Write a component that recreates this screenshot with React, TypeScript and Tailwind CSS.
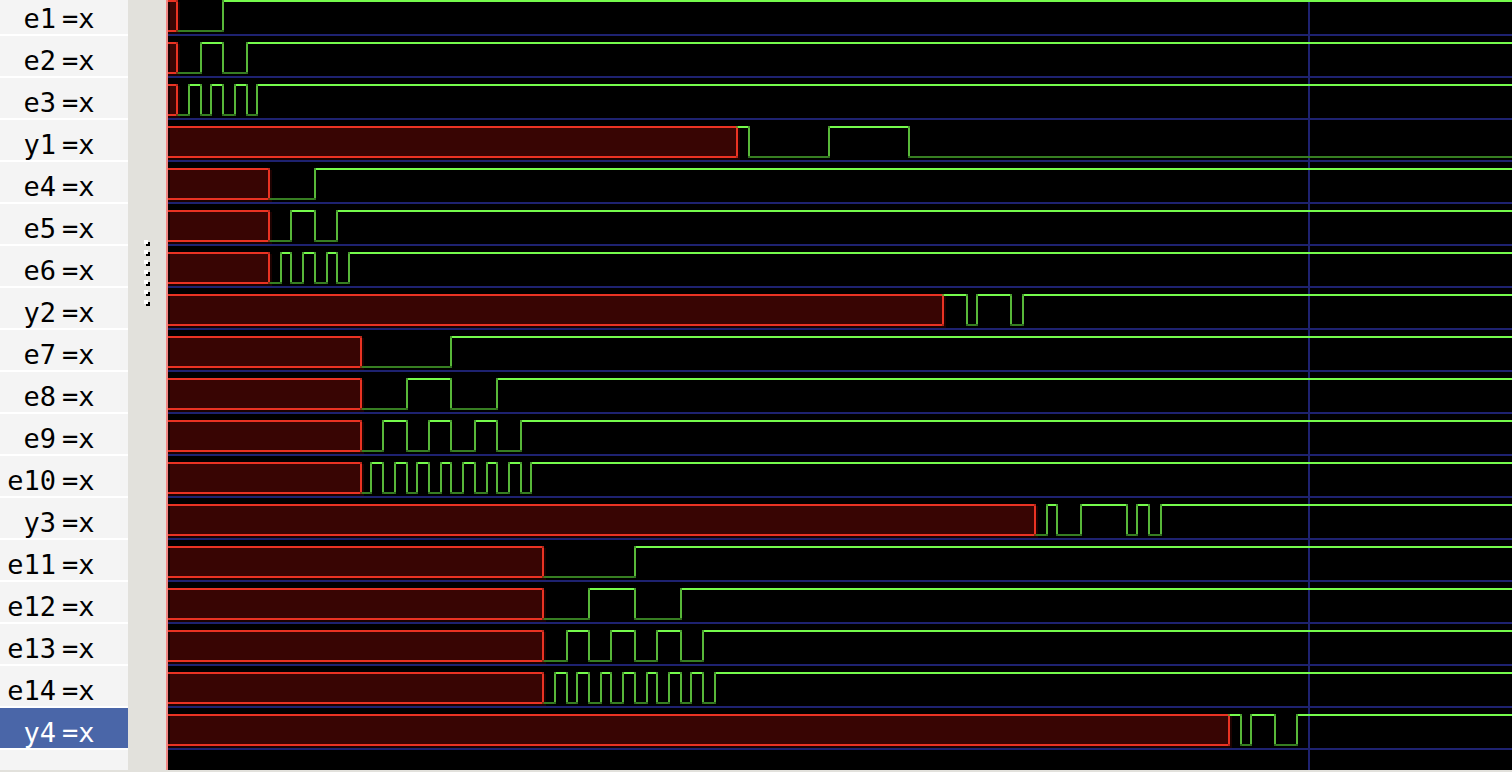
import { useState } from "react";

type Signal = {
  name: string;
  known: number;
  start: 0 | 1;
  edges: number[];
};

const signals: Signal[] = [
  { name: "e1", known: 9, start: 0, edges: [55] },
  { name: "e2", known: 9, start: 0, edges: [33, 55, 79] },
  { name: "e3", known: 9, start: 0, edges: [21, 33, 43, 55, 67, 79, 89] },
  { name: "y1", known: 569, start: 1, edges: [581, 661, 741] },
  { name: "e4", known: 101, start: 0, edges: [147] },
  { name: "e5", known: 101, start: 0, edges: [123, 147, 169] },
  { name: "e6", known: 101, start: 0, edges: [113, 123, 135, 147, 159, 169, 181] },
  { name: "y2", known: 775, start: 1, edges: [799, 809, 843, 855] },
  { name: "e7", known: 193, start: 0, edges: [283] },
  { name: "e8", known: 193, start: 0, edges: [239, 283, 329] },
  { name: "e9", known: 193, start: 0, edges: [215, 239, 261, 283, 307, 329, 353] },
  {
    name: "e10",
    known: 193,
    start: 0,
    edges: [203, 215, 227, 239, 249, 261, 273, 283, 295, 307, 319, 329, 341, 353, 363],
  },
  { name: "y3", known: 867, start: 0, edges: [879, 889, 913, 959, 969, 981, 993] },
  { name: "e11", known: 375, start: 0, edges: [467] },
  { name: "e12", known: 375, start: 0, edges: [421, 467, 513] },
  { name: "e13", known: 375, start: 0, edges: [399, 421, 443, 467, 489, 513, 535] },
  {
    name: "e14",
    known: 375,
    start: 0,
    edges: [387, 399, 409, 421, 433, 443, 455, 467, 479, 489, 501, 513, 523, 535, 547],
  },
  { name: "y4", known: 1061, start: 1, edges: [1073, 1083, 1107, 1129] },
];

const ROW = 42;
const FAR = 6000;
const MARKER = 1141;

function Trace({ signal, y }: { signal: Signal; y: number }) {
  const { known, start, edges } = signal;
  const stops = [known, ...edges, FAR];
  const isHigh = (i: number) => (start + i) % 2 === 1;
  return (
    <g>
      <rect x={0} y={y + 2} width={known + 3} height={32} fill="#1c0201" />
      <rect x={2} y={y + 2} width={known - 3} height={28} fill="#380503" />
      <rect x={0} y={y} width={known + 1} height={2} fill="#ea3323" />
      <rect x={0} y={y + 30} width={known + 1} height={2} fill="#ea3323" />
      <rect x={known - 1} y={y} width={2} height={32} fill="#ea3323" />
      <rect
        x={known - 1}
        y={start ? y : y + 30}
        width={2}
        height={2}
        fill={start ? "#7a8a2c" : "#7a3a14"}
      />
      <rect x={known - 1} y={start ? y + 30 : y} width={2} height={2} fill="#b4271b" />
      {stops.slice(0, -1).map((x, i) => (
        <rect
          key={x}
          x={x + 1}
          y={isHigh(i) ? y : y + 30}
          width={stops[i + 1] - x - 2}
          height={2}
          fill={isHigh(i) ? "#75fb4c" : "#377e22"}
        />
      ))}
      {edges.map((x) => (
        <g key={x}>
          <rect x={x - 1} y={y + 2} width={2} height={28} fill="#58b839" />
          <rect x={x - 1} y={y} width={2} height={2} fill="#479a2e" />
          <rect x={x - 1} y={y + 30} width={2} height={2} fill="#2f6c1d" />
        </g>
      ))}
      <rect x={0} y={y + 34} width={FAR} height={2} fill="#1e2270" />
    </g>
  );
}

function Grip() {
  return (
    <div className="flex flex-col gap-1">
      {[0, 1, 2, 3, 4, 5, 6].map((dot) => (
        <svg key={dot} width="6" height="6" viewBox="0 0 6 6" shapeRendering="crispEdges">
          <rect x="2" y="2" width="4" height="4" fill="#000" />
          <path d="M0 0H4V2H2V4H0Z" fill="#fff" />
          <rect x="2" y="2" width="2" height="2" fill="#fff" />
        </svg>
      ))}
    </div>
  );
}

export default function App() {
  const [selected, setSelected] = useState("y4");
  return (
    <div className="flex min-h-screen w-full overflow-hidden bg-[#e2e1dc] pb-0.5">
      <div className="w-32 shrink-0 overflow-hidden bg-[#f4f4f4]">
        <ul className="-mt-1.5">
          {signals.map(({ name }) => (
            <li key={name} className="border-b-2 border-white">
              <button
                type="button"
                aria-pressed={selected === name}
                onClick={() => setSelected(name)}
                className={`flex h-10 w-full gap-1.5 overflow-hidden pt-2 font-['DejaVu_Sans_Mono',monospace] text-[27px] leading-[34px] ${
                  selected === name ? "bg-[#4a66a8] text-white" : "text-black"
                }`}
              >
                <span className="w-14 shrink-0 text-right">{name}</span>
                <span>=x</span>
              </button>
            </li>
          ))}
        </ul>
      </div>
      <div className="flex w-[38px] shrink-0 justify-center pt-60">
        <Grip />
      </div>
      <div className="min-w-0 flex-1 border-l-2 border-[#f08784] bg-black">
        <svg
          className="block w-full"
          height={signals.length * ROW + 14}
          shapeRendering="crispEdges"
          role="img"
          aria-label="Signal waveforms"
        >
          <rect x={MARKER - 1} y={0} width={2} height={FAR} fill="#1e2270" />
          {signals.map((signal, i) => (
            <Trace key={signal.name} signal={signal} y={i * ROW} />
          ))}
        </svg>
      </div>
    </div>
  );
}
